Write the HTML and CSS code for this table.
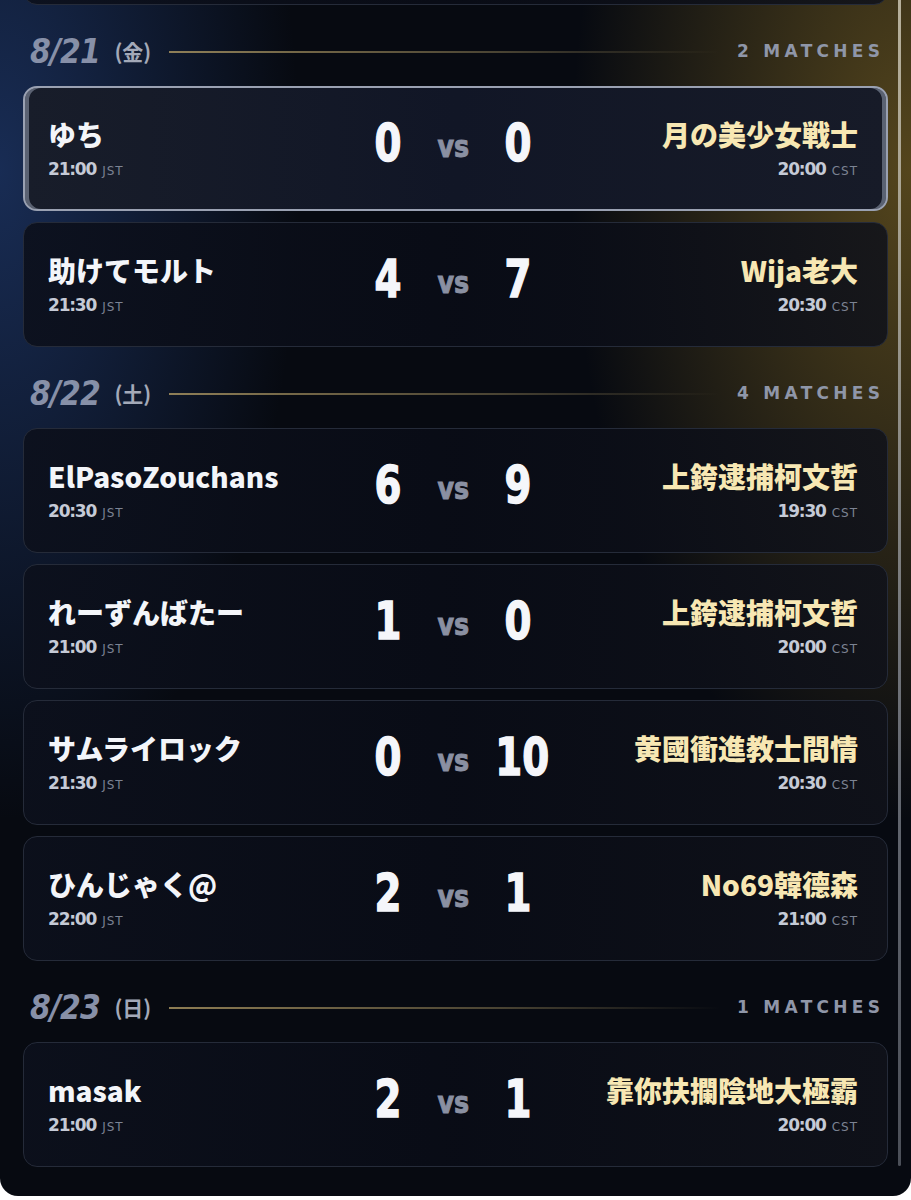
FILE: index.html
```html
<!DOCTYPE html>
<html lang="ja">
<head>
    <meta charset="UTF-8">
    <meta name="viewport" content="width=device-width, initial-scale=1.0">
    <title>Match Schedule</title>
    <link rel="stylesheet" href="styles.css">
</head>
<body>
    <div class="panel">
        <div class="scrollbar"></div>

        <div class="match prev"></div>

        <div class="day">
            <span class="date">8/21</span>
            <span class="weekday">(金)</span>
            <span class="rule"></span>
            <span class="count">2 MATCHES</span>
        </div>
        <div class="list">
            <div class="match current">
                <div class="side home">
                    <div class="name">ゆち</div>
                    <div class="time">21:00<span class="tz">JST</span></div>
                </div>
                <div class="score"><span class="pts">0</span><span class="vs">vs</span><span class="pts">0</span></div>
                <div class="side away">
                    <div class="name">月の美少女戦士</div>
                    <div class="time">20:00<span class="tz">CST</span></div>
                </div>
            </div>
            <div class="match">
                <div class="side home">
                    <div class="name">助けてモルト</div>
                    <div class="time">21:30<span class="tz">JST</span></div>
                </div>
                <div class="score"><span class="pts">4</span><span class="vs">vs</span><span class="pts">7</span></div>
                <div class="side away">
                    <div class="name">Wija老大</div>
                    <div class="time">20:30<span class="tz">CST</span></div>
                </div>
            </div>
        </div>

        <div class="day">
            <span class="date">8/22</span>
            <span class="weekday">(土)</span>
            <span class="rule"></span>
            <span class="count">4 MATCHES</span>
        </div>
        <div class="list">
            <div class="match">
                <div class="side home">
                    <div class="name">ElPasoZouchans</div>
                    <div class="time">20:30<span class="tz">JST</span></div>
                </div>
                <div class="score"><span class="pts">6</span><span class="vs">vs</span><span class="pts">9</span></div>
                <div class="side away">
                    <div class="name">上銙逮捕柯文哲</div>
                    <div class="time">19:30<span class="tz">CST</span></div>
                </div>
            </div>
            <div class="match">
                <div class="side home">
                    <div class="name">れーずんばたー</div>
                    <div class="time">21:00<span class="tz">JST</span></div>
                </div>
                <div class="score"><span class="pts">1</span><span class="vs">vs</span><span class="pts">0</span></div>
                <div class="side away">
                    <div class="name">上銙逮捕柯文哲</div>
                    <div class="time">20:00<span class="tz">CST</span></div>
                </div>
            </div>
            <div class="match">
                <div class="side home">
                    <div class="name">サムライロック</div>
                    <div class="time">21:30<span class="tz">JST</span></div>
                </div>
                <div class="score"><span class="pts">0</span><span class="vs">vs</span><span class="pts">10</span></div>
                <div class="side away">
                    <div class="name">黄國衝進教士間情</div>
                    <div class="time">20:30<span class="tz">CST</span></div>
                </div>
            </div>
            <div class="match">
                <div class="side home">
                    <div class="name">ひんじゃく@</div>
                    <div class="time">22:00<span class="tz">JST</span></div>
                </div>
                <div class="score"><span class="pts">2</span><span class="vs">vs</span><span class="pts">1</span></div>
                <div class="side away">
                    <div class="name">No69韓德森</div>
                    <div class="time">21:00<span class="tz">CST</span></div>
                </div>
            </div>
        </div>

        <div class="day">
            <span class="date">8/23</span>
            <span class="weekday">(日)</span>
            <span class="rule"></span>
            <span class="count">1 MATCHES</span>
        </div>
        <div class="list">
            <div class="match">
                <div class="side home">
                    <div class="name">masak</div>
                    <div class="time">21:00<span class="tz">JST</span></div>
                </div>
                <div class="score"><span class="pts">2</span><span class="vs">vs</span><span class="pts">1</span></div>
                <div class="side away">
                    <div class="name">靠你扶攔陰地大極霸</div>
                    <div class="time">20:00<span class="tz">CST</span></div>
                </div>
            </div>
        </div>
    </div>
</body>
</html>
```

FILE: styles.css
```css
body {
    margin: 0;
    background: #ffffff;
    font-family: "Noto Sans CJK JP", "Noto Sans", sans-serif;
}

.panel {
    position: relative;
    margin-top: -120px;
    padding: 0 23px 29px;
    border-radius: 0 0 18px 18px;
    overflow: hidden;
    background:
        radial-gradient(ellipse 340px 650px at 100% 290px, rgba(132, 106, 36, 0.62), rgba(132, 106, 36, 0) 100%),
        radial-gradient(ellipse 300px 650px at 0% 290px, rgba(35, 65, 125, 0.62), rgba(35, 65, 125, 0) 100%),
        #070a11;
}

.scrollbar {
    position: absolute;
    top: 0;
    bottom: 30px;
    right: 10px;
    width: 3px;
    border-radius: 2px;
    background: linear-gradient(180deg, rgba(225, 218, 195, 0.8), rgba(150, 155, 165, 0.7) 60%, rgba(120, 125, 135, 0.6));
}

.day {
    display: flex;
    align-items: center;
    height: 44px;
    margin: 24px 0 13px;
    padding: 0 8px 0 7px;
}

.date {
    display: inline-block;
    font-family: "DejaVu Sans", sans-serif;
    font-style: italic;
    font-weight: 700;
    font-size: 34px;
    letter-spacing: -1px;
    color: #8790a8;
    transform: scaleX(0.88);
    transform-origin: left center;
    margin-right: -9px;
}

.weekday {
    margin-left: 14px;
    font-size: 21px;
    font-weight: 700;
    color: #a3a9b8;
}

.rule {
    flex: 1;
    height: 2px;
    margin: 2px 17px 0 18px;
    background: linear-gradient(90deg, rgba(165, 145, 95, 0.85), rgba(140, 125, 85, 0.5) 60%, rgba(140, 125, 85, 0));
}

.count {
    font-family: "DejaVu Sans", sans-serif;
    font-weight: 700;
    font-size: 17px;
    letter-spacing: 4.3px;
    margin-right: -4.3px;
    color: #8f96a8;
}

.list {
    display: flex;
    flex-direction: column;
    gap: 11px;
}

.match {
    display: grid;
    grid-template-columns: 1fr auto 1fr;
    align-items: center;
    box-sizing: border-box;
    min-height: 125px;
    padding: 0 29px 0 24px;
    border: 1px solid #252b39;
    border-radius: 14px;
    background: linear-gradient(90deg, rgba(12, 16, 28, 0.92), rgba(9, 12, 22, 0.94) 50%, rgba(16, 18, 26, 0.88));
}

.match.current {
    padding: 0 28px 0 23px;
    border: 2px solid #9aa1b2;
    background: linear-gradient(90deg, #181d2a, #111626 50%, #171b28);
    box-shadow: inset 4px 0 0 rgba(120, 128, 146, 0.7), inset -4px 0 0 rgba(120, 128, 146, 0.7);
}

.side {
    display: flex;
    flex-direction: column;
    gap: 8px;
    min-width: 0;
}

.away {
    align-items: flex-end;
    text-align: right;
}

.name {
    font-size: 28px;
    font-weight: 900;
    line-height: 34px;
    color: #f3f5f9;
    white-space: nowrap;
}

.away .name {
    color: #f7e7b3;
}

.time {
    font-family: "DejaVu Sans", sans-serif;
    font-weight: 700;
    font-size: 17px;
    letter-spacing: -1.2px;
    line-height: 20px;
    color: #c5cad6;
}

.tz {
    margin-left: 6px;
    font-weight: 400;
    font-size: 12px;
    letter-spacing: 1px;
    color: #7c8393;
}

.score {
    display: flex;
    align-items: center;
    margin-bottom: 9px;
}

.pts {
    display: inline-block;
    width: 60px;
    text-align: center;
    font-family: "DejaVu Sans", sans-serif;
    font-weight: 700;
    font-size: 51px;
    line-height: 56px;
    color: #f5f6fa;
    -webkit-text-stroke: 1.5px #f5f6fa;
    transform: scaleX(0.76);
}

.vs {
    display: inline-block;
    margin: 4px 16px 0;
    font-family: "DejaVu Sans", sans-serif;
    font-weight: 700;
    font-size: 31px;
    color: #8a90a2;
    -webkit-text-stroke: 1px #8a90a2;
    transform: scaleX(0.82);
}
```
